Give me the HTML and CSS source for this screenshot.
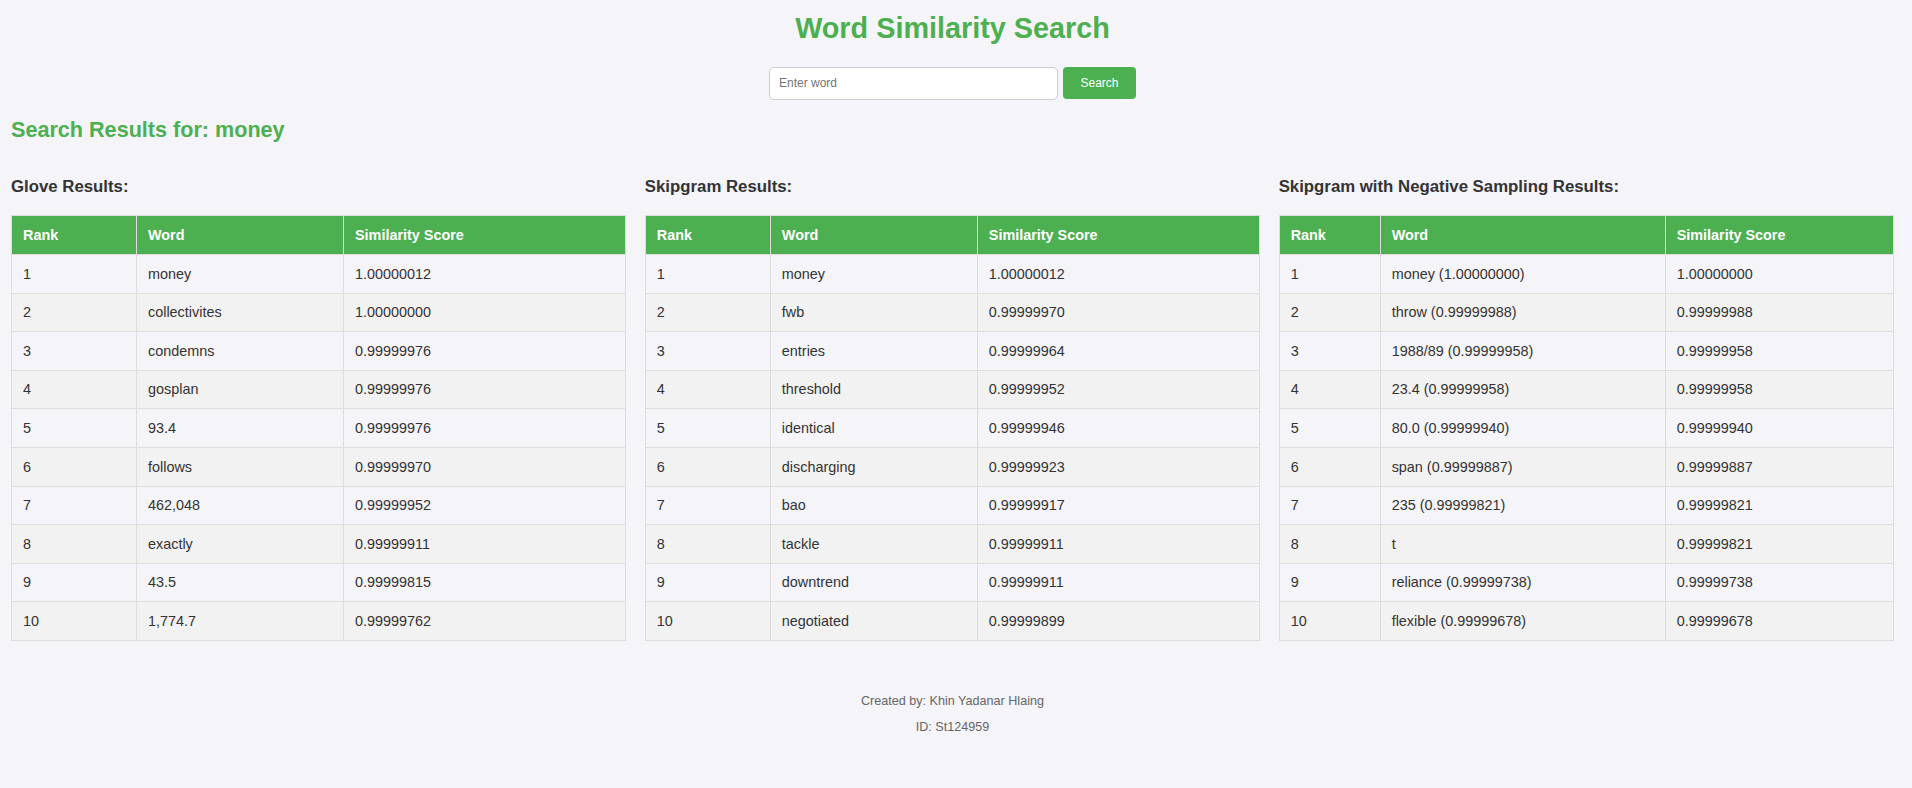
FILE: index.html
```html
<!DOCTYPE html>
<html lang="en">
<head>
<meta charset="utf-8">
<title>Word Similarity Search</title>
<link rel="stylesheet" href="styles.css">
</head>
<body>
<h1 class="title">Word Similarity Search</h1>
<form class="search">
  <input class="search-input" type="text" placeholder="Enter word">
  <button class="search-btn" type="button">Search</button>
</form>
<h2 class="results-title">Search Results for: money</h2>
<div class="columns">
  <section class="col">
    <h3 class="col-title">Glove Results:</h3>
    <table class="res">
      <colgroup><col class="c-rank-a"><col class="c-word-a"><col></colgroup>
      <thead><tr><th>Rank</th><th>Word</th><th>Similarity Score</th></tr></thead>
      <tbody>
        <tr><td>1</td><td>money</td><td>1.00000012</td></tr>
        <tr><td>2</td><td>collectivites</td><td>1.00000000</td></tr>
        <tr><td>3</td><td>condemns</td><td>0.99999976</td></tr>
        <tr><td>4</td><td>gosplan</td><td>0.99999976</td></tr>
        <tr><td>5</td><td>93.4</td><td>0.99999976</td></tr>
        <tr><td>6</td><td>follows</td><td>0.99999970</td></tr>
        <tr><td>7</td><td>462,048</td><td>0.99999952</td></tr>
        <tr><td>8</td><td>exactly</td><td>0.99999911</td></tr>
        <tr><td>9</td><td>43.5</td><td>0.99999815</td></tr>
        <tr><td>10</td><td>1,774.7</td><td>0.99999762</td></tr>
      </tbody>
    </table>
  </section>
  <section class="col">
    <h3 class="col-title">Skipgram Results:</h3>
    <table class="res">
      <colgroup><col class="c-rank-a"><col class="c-word-a"><col></colgroup>
      <thead><tr><th>Rank</th><th>Word</th><th>Similarity Score</th></tr></thead>
      <tbody>
        <tr><td>1</td><td>money</td><td>1.00000012</td></tr>
        <tr><td>2</td><td>fwb</td><td>0.99999970</td></tr>
        <tr><td>3</td><td>entries</td><td>0.99999964</td></tr>
        <tr><td>4</td><td>threshold</td><td>0.99999952</td></tr>
        <tr><td>5</td><td>identical</td><td>0.99999946</td></tr>
        <tr><td>6</td><td>discharging</td><td>0.99999923</td></tr>
        <tr><td>7</td><td>bao</td><td>0.99999917</td></tr>
        <tr><td>8</td><td>tackle</td><td>0.99999911</td></tr>
        <tr><td>9</td><td>downtrend</td><td>0.99999911</td></tr>
        <tr><td>10</td><td>negotiated</td><td>0.99999899</td></tr>
      </tbody>
    </table>
  </section>
  <section class="col">
    <h3 class="col-title">Skipgram with Negative Sampling Results:</h3>
    <table class="res">
      <colgroup><col class="c-rank-b"><col class="c-word-b"><col></colgroup>
      <thead><tr><th>Rank</th><th>Word</th><th>Similarity Score</th></tr></thead>
      <tbody>
        <tr><td>1</td><td>money (1.00000000)</td><td>1.00000000</td></tr>
        <tr><td>2</td><td>throw (0.99999988)</td><td>0.99999988</td></tr>
        <tr><td>3</td><td>1988/89 (0.99999958)</td><td>0.99999958</td></tr>
        <tr><td>4</td><td>23.4 (0.99999958)</td><td>0.99999958</td></tr>
        <tr><td>5</td><td>80.0 (0.99999940)</td><td>0.99999940</td></tr>
        <tr><td>6</td><td>span (0.99999887)</td><td>0.99999887</td></tr>
        <tr><td>7</td><td>235 (0.99999821)</td><td>0.99999821</td></tr>
        <tr><td>8</td><td>t</td><td>0.99999821</td></tr>
        <tr><td>9</td><td>reliance (0.99999738)</td><td>0.99999738</td></tr>
        <tr><td>10</td><td>flexible (0.99999678)</td><td>0.99999678</td></tr>
      </tbody>
    </table>
  </section>
</div>
<footer class="footer">
  <p class="footer-line">Created by: Khin Yadanar Hlaing</p>
  <p class="footer-line">ID: St124959</p>
</footer>
</body>
</html>
```
FILE: styles.css
```css
html, body {
  margin: 0;
  background: #f4f4f9;
}
body {
  padding: 0 18px 0 11px;
  font-family: "Liberation Sans", Arial, sans-serif;
  color: #333;
}
.title {
  margin: 12px 0 0;
  font-size: 28.8px;
  line-height: 33px;
  font-weight: bold;
  text-align: center;
  color: #4CAF50;
}
.search {
  display: flex;
  justify-content: center;
  align-items: flex-start;
  margin: 21.7px 0 0;
}
.search-input {
  box-sizing: border-box;
  width: 289px;
  height: 33px;
  margin: 0;
  padding: 0 9px;
  border: 1px solid #ccc;
  border-radius: 5px;
  background: #fff;
  font-family: "Liberation Sans", Arial, sans-serif;
  font-size: 12px;
  color: #333;
}
.search-input::placeholder {
  color: #757575;
}
.search-btn {
  box-sizing: border-box;
  width: 73px;
  height: 32px;
  margin: 0.3px 0 0 5px;
  padding: 0;
  border: none;
  border-radius: 4px;
  background: #4CAF50;
  color: #fff;
  font-family: "Liberation Sans", Arial, sans-serif;
  font-size: 12px;
}
.results-title {
  margin: 17.6px 0 0;
  font-size: 21.6px;
  line-height: 25px;
  font-weight: bold;
  color: #4CAF50;
}
.columns {
  display: grid;
  grid-template-columns: 1fr 1fr 1fr;
  column-gap: 18.5px;
  margin-top: 35.2px;
}
.col-title {
  margin: 0;
  font-size: 16.8px;
  line-height: 19.3px;
  font-weight: bold;
  color: #333;
}
.res {
  width: 100%;
  margin-top: 18.7px;
  border-collapse: collapse;
  table-layout: fixed;
  font-size: 14.4px;
}
.c-rank-a { width: 125px; }
.c-word-a { width: 207px; }
.c-rank-b { width: 101px; }
.c-word-b { width: 285px; }
.res th, .res td {
  border: 1px solid #ddd;
  padding: 10.55px 11px;
  line-height: 16.5px;
  text-align: left;
  white-space: nowrap;
}
.res th {
  background: #4CAF50;
  color: #fff;
  font-weight: bold;
}
.res tbody tr:nth-child(even) {
  background: #f2f2f2;
}
.footer {
  margin-top: 48px;
  text-align: center;
}
.footer-line {
  margin: 0;
  font-size: 12.6px;
  line-height: 25.6px;
  color: #666;
}
```
